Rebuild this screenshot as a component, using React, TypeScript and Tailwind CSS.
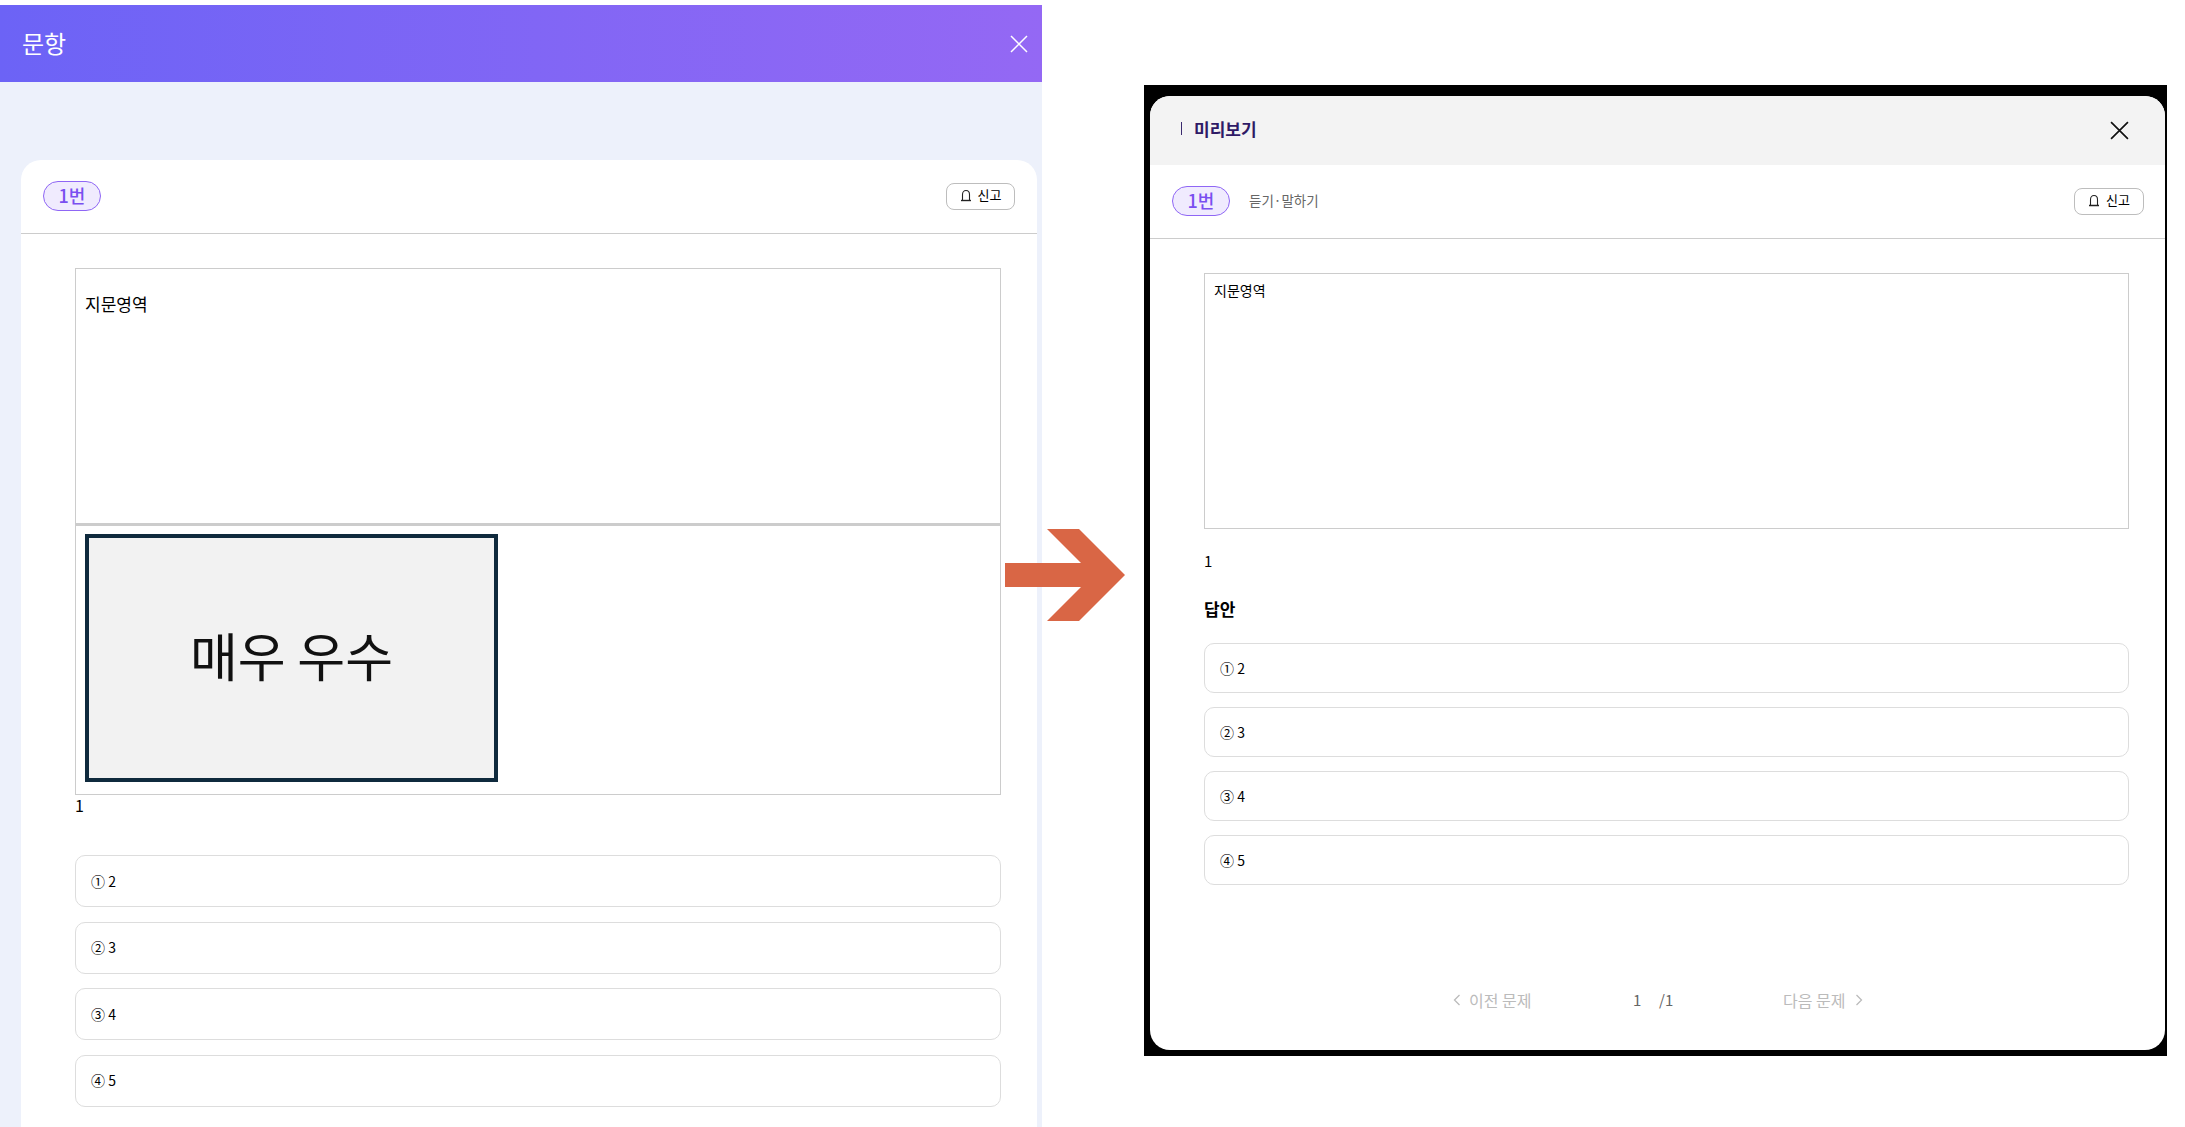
const FONT = "font-['Noto_Sans_CJK_KR','Noto_Sans',sans-serif]";

const leftChoices = ["① 2", "② 3", "③ 4", "④ 5"];
const rightChoices = ["① 2", "② 3", "③ 4", "④ 5"];

function NumberPill() {
  return (
    <span className="flex h-[30px] w-[58px] items-center justify-center rounded-full border border-[#8f66f5] bg-[#f0ebfe] pb-[2px] text-[18px] font-medium text-[#7a4ff0]">
      1번
    </span>
  );
}

function ReportButton({ className }: { className: string }) {
  return (
    <button className={`flex h-[27px] items-center justify-center gap-[6px] rounded-[8px] border border-[#bdbdbd] bg-white pb-[2px] text-[13px] text-black ${className}`}>
      <svg width="12" height="13" viewBox="0 0 12 13" fill="none" stroke="#222" strokeWidth="1.1">
        <path d="M2.5 11V5.5C2.5 3 4 1.5 6 1.5S9.5 3 9.5 5.5V11" />
        <path d="M1 11.5H11" strokeWidth="1.4" />
      </svg>
      신고
    </button>
  );
}

function CloseIcon({ size, stroke, width }: { size: number; stroke: string; width: number }) {
  return (
    <svg width={size} height={size} viewBox="0 0 18 18" fill="none" stroke={stroke} strokeWidth={width}>
      <path d="M1 1L17 17M17 1L1 17" />
    </svg>
  );
}

function LeftPanel() {
  return (
    <section className="mt-[5px] flex h-[1122px] w-[1042px] shrink-0 flex-col overflow-hidden bg-[#edf1fb]">
      <header className="flex h-[77px] shrink-0 items-center justify-between bg-gradient-to-r from-[#6c63f6] to-[#9468f4] pl-[22px] pr-[14px] text-white">
        <h1 className="pb-[2px] text-[24px] leading-none">문항</h1>
        <CloseIcon size={18} stroke="#ffffff" width={1.5} />
      </header>

      <div className="ml-[21px] mt-[78px] w-[1016px] grow rounded-t-[20px] bg-white">
        <div className="flex h-[74px] items-center justify-between border-b border-[#cccccc] px-[22px] pb-[1px]">
          <NumberPill />
          <ReportButton className="w-[69px]" />
        </div>

        <div className="ml-[54px] mr-[36px] mt-[34px]">
          <div className="h-[256px] border border-[#cccccc] pl-[9px] pt-[24px] text-[17px] leading-[22px] text-black">
            지문영역
          </div>
          <div className="h-[271px] border-x border-b border-t-2 border-[#cccccc] pl-[9px] pt-[8px]">
            <div className="flex h-[248px] w-[413px] items-center justify-center border-[4px] border-[#0f2a3d] bg-[#f2f2f2] pb-[6px] text-[52px] leading-none text-[#111111]">
              매우 우수
            </div>
          </div>
          <p className="text-[16px] leading-[20px] text-black">1</p>

          <ul className="mt-[40px] flex flex-col gap-[14.5px]">
            {leftChoices.map((choice) => (
              <li
                key={choice}
                className="flex h-[52px] items-center rounded-[10px] border border-[#dddddd] pl-[15px] text-[14px] text-black"
              >
                {choice}
              </li>
            ))}
          </ul>
        </div>
      </div>
    </section>
  );
}

function RightPanel() {
  return (
    <section className="ml-[102px] mt-[85px] h-[971px] w-[1023px] shrink-0 border-b-[6px] border-l-[6px] border-r-[2px] border-t-[11px] border-black bg-black">
      <div className="flex h-full flex-col overflow-hidden rounded-[20px] bg-white">
        <header className="flex h-[69px] shrink-0 items-center justify-between bg-[#f3f3f3] pl-[31px] pr-[36px]">
          <div className="flex items-center gap-[12px] pb-[4px]">
            <span className="h-[13px] w-px bg-[#3a2a6e]" />
            <h2 className="text-[17px] font-bold leading-none text-[#2f1a66]">미리보기</h2>
          </div>
          <CloseIcon size={19} stroke="#111111" width={1.6} />
        </header>

        <div className="flex h-[74px] shrink-0 items-center border-b border-[#cccccc] pl-[22px] pr-[21px] pb-[1px]">
          <NumberPill />
          <span className="ml-[19px] pb-[2px] text-[13.5px] text-[#666666]">듣기·말하기</span>
          <ReportButton className="ml-auto w-[70px]" />
        </div>

        <div className="ml-[54px] mr-[36px] mt-[34px] flex grow flex-col">
          <div className="h-[256px] border border-[#cccccc] pl-[9px] pt-[5px] text-[14px] leading-[22px] text-black">
            지문영역
          </div>
          <p className="mt-[22px] text-[15px] leading-[20px] text-black">1</p>
          <h3 className="mt-[26px] text-[17px] font-bold leading-[24px] text-black">답안</h3>

          <ul className="mt-[22px] flex flex-col gap-[14px]">
            {rightChoices.map((choice) => (
              <li
                key={choice}
                className="flex h-[50px] items-center rounded-[10px] border border-[#dddddd] pl-[15px] text-[14px] text-black"
              >
                {choice}
              </li>
            ))}
          </ul>
        </div>

        <nav className="mb-[38px] ml-[303px] flex h-[24px] shrink-0 items-center text-[16px] text-[#bbbbbb]">
          <svg width="8" height="12" viewBox="0 0 8 12" fill="none" stroke="#bbbbbb" strokeWidth="1.3">
            <path d="M6.5 1L1.5 6L6.5 11" />
          </svg>
          <span className="ml-[8px] w-[64px] whitespace-nowrap">이전 문제</span>
          <span className="ml-[100px] w-[26px] text-[15px] text-[#666666]">1</span>
          <span className="w-[124px] text-[15px] text-[#666666]">/1</span>
          <span className="w-[72px] whitespace-nowrap">다음 문제</span>
          <svg width="8" height="12" viewBox="0 0 8 12" fill="none" stroke="#bbbbbb" strokeWidth="1.3">
            <path d="M1.5 1L6.5 6L1.5 11" />
          </svg>
        </nav>
      </div>
    </section>
  );
}

export default function App() {
  return (
    <div className={`relative flex h-[1127px] w-[2185px] items-start overflow-hidden bg-white ${FONT}`}>
      <LeftPanel />
      <RightPanel />

      {/* arrow sits over the gap between the two screens */}
      <svg className="absolute left-[1005px] top-[529px]" width="120" height="92" viewBox="0 0 120 92">
        <path d="M0 34H76L42 0H74L120 46L74 92H42L76 58H0Z" fill="#d96645" />
      </svg>
    </div>
  );
}
